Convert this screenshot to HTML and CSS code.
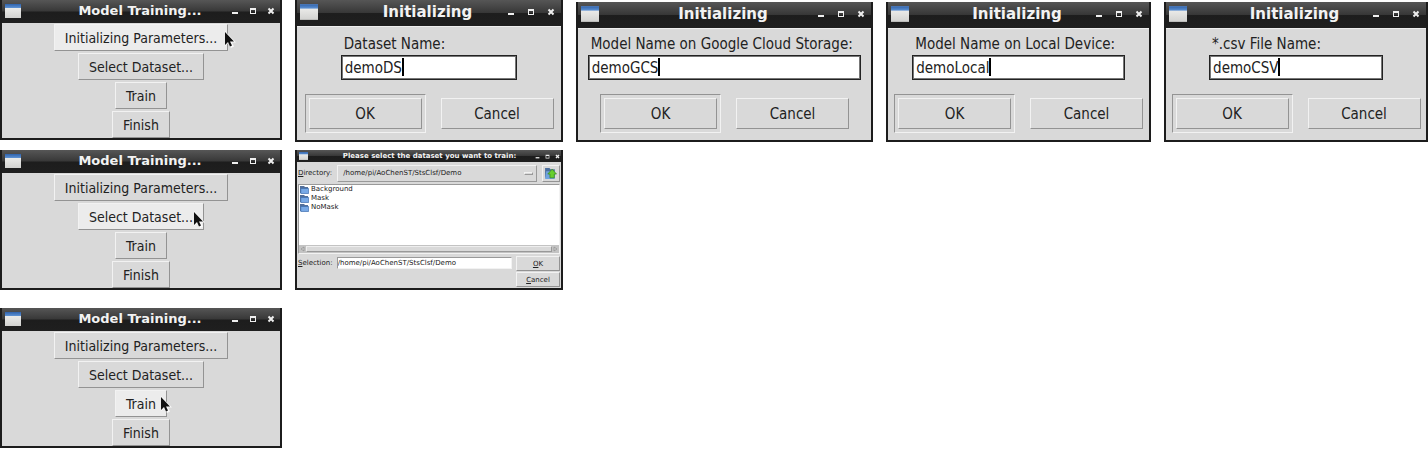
FILE: index.html
```html
<!DOCTYPE html>
<html lang="en">
<head>
<meta charset="utf-8">
<meta name="viewport" content="width=device-width, initial-scale=1">
<title>Model Training</title>
<link rel="stylesheet" href="styles.css">
</head>
<body>
<svg class="defs" width="0" height="0" aria-hidden="true">
  <defs>
    <linearGradient id="blue" x1="0" y1="0" x2="0" y2="1"><stop offset="0" stop-color="#2f62ab"/><stop offset="1" stop-color="#5f93d4"/></linearGradient>
    <linearGradient id="pane" x1="0" y1="0" x2="0" y2="1"><stop offset="0" stop-color="#f4f4f2"/><stop offset="1" stop-color="#d2d2d0"/></linearGradient>
    <symbol id="app" viewBox="0 0 16 14"><rect width="16" height="14" fill="url(#pane)"/><rect width="16" height="4" fill="url(#blue)"/></symbol>
    <symbol id="min" viewBox="0 0 8 8"><path d="M1 5h6v2H1z" fill="#eee"/></symbol>
    <symbol id="max" viewBox="0 0 8 8"><path d="M1 1h6v6H1zM2 3v3h4V3z" fill="#eee" fill-rule="evenodd"/></symbol>
    <symbol id="close" viewBox="0 0 8 8"><path d="M1.500 1.500l5 5M6.500 1.500l-5 5" stroke="#eee" stroke-width="2"/></symbol>
    <symbol id="pointer" viewBox="0 0 12 18"><path d="M1 0v15l3.500-3 2.500 5 3-1.500L8 11.500h4z" fill="#fff" opacity=".85"/><path d="M1 1v13l3-3 2 4.500 2-.9-2-4.100h4z" fill="#111"/></symbol>
    <symbol id="folder" viewBox="0 0 9 8"><path d="M0 0h4l1 1h3v6H0z" fill="#526f9b"/><path d="M.8 2.500h7.800v5H.8z" fill="#78a9e6" stroke="#3d6eaf" stroke-width=".7"/></symbol>
  </defs>
</svg>
<main class="board">
  <section class="row">
    <article class="window menu">
      <header class="bar"><svg class="app"><use href="#app"/></svg><h2>Model Training...</h2>
        <div class="controls"><button aria-label="Minimize"><svg><use href="#min"/></svg></button><button aria-label="Maximize"><svg><use href="#max"/></svg></button><button aria-label="Close"><svg><use href="#close"/></svg></button></div></header>
      <div class="actions">
        <button class="btn active">Initializing Parameters...<svg class="pointer on-params"><use href="#pointer"/></svg></button>
        <button class="btn">Select Dataset...</button>
        <button class="btn">Train</button>
        <button class="btn">Finish</button>
      </div>
    </article>
    <article class="window prompt tall">
      <header class="bar"><svg class="app"><use href="#app"/></svg><h2>Initializing</h2>
        <div class="controls"><button aria-label="Minimize"><svg><use href="#min"/></svg></button><button aria-label="Maximize"><svg><use href="#max"/></svg></button><button aria-label="Close"><svg><use href="#close"/></svg></button></div></header>
      <form class="form">
        <div class="field"><label for="ds">Dataset Name:</label><div class="entry"><input id="ds" type="text" value="demoDS"><i class="caret caret-ds"></i></div></div>
        <div class="choices"><span class="default"><button type="button" class="btn">OK</button></span><button type="button" class="btn">Cancel</button></div>
      </form>
    </article>
    <article class="window prompt">
      <header class="bar"><svg class="app"><use href="#app"/></svg><h2>Initializing</h2>
        <div class="controls"><button aria-label="Minimize"><svg><use href="#min"/></svg></button><button aria-label="Maximize"><svg><use href="#max"/></svg></button><button aria-label="Close"><svg><use href="#close"/></svg></button></div></header>
      <form class="form">
        <div class="field widest"><label for="gcs">Model Name on Google Cloud Storage:</label><div class="entry"><input id="gcs" type="text" value="demoGCS"><i class="caret caret-gcs"></i></div></div>
        <div class="choices"><span class="default"><button type="button" class="btn">OK</button></span><button type="button" class="btn">Cancel</button></div>
      </form>
    </article>
    <article class="window prompt">
      <header class="bar"><svg class="app"><use href="#app"/></svg><h2>Initializing</h2>
        <div class="controls"><button aria-label="Minimize"><svg><use href="#min"/></svg></button><button aria-label="Maximize"><svg><use href="#max"/></svg></button><button aria-label="Close"><svg><use href="#close"/></svg></button></div></header>
      <form class="form">
        <div class="field wide"><label for="local">Model Name on Local Device:</label><div class="entry"><input id="local" type="text" value="demoLocal"><i class="caret caret-local"></i></div></div>
        <div class="choices"><span class="default"><button type="button" class="btn">OK</button></span><button type="button" class="btn">Cancel</button></div>
      </form>
    </article>
    <article class="window prompt">
      <header class="bar"><svg class="app"><use href="#app"/></svg><h2>Initializing</h2>
        <div class="controls"><button aria-label="Minimize"><svg><use href="#min"/></svg></button><button aria-label="Maximize"><svg><use href="#max"/></svg></button><button aria-label="Close"><svg><use href="#close"/></svg></button></div></header>
      <form class="form">
        <div class="field"><label for="csv">*.csv File Name:</label><div class="entry"><input id="csv" type="text" value="demoCSV"><i class="caret caret-csv"></i></div></div>
        <div class="choices"><span class="default"><button type="button" class="btn">OK</button></span><button type="button" class="btn">Cancel</button></div>
      </form>
    </article>
  </section>

  <section class="row second">
    <article class="window menu">
      <header class="bar"><svg class="app"><use href="#app"/></svg><h2>Model Training...</h2>
        <div class="controls"><button aria-label="Minimize"><svg><use href="#min"/></svg></button><button aria-label="Maximize"><svg><use href="#max"/></svg></button><button aria-label="Close"><svg><use href="#close"/></svg></button></div></header>
      <div class="actions">
        <button class="btn">Initializing Parameters...</button>
        <button class="btn active">Select Dataset...<svg class="pointer on-dataset"><use href="#pointer"/></svg></button>
        <button class="btn">Train</button>
        <button class="btn">Finish</button>
      </div>
    </article>
    <article class="window chooser">
      <header class="bar"><svg class="app"><use href="#app"/></svg><h2>Please select the dataset you want to train:</h2>
        <div class="controls"><button aria-label="Minimize"><svg><use href="#min"/></svg></button><button aria-label="Maximize"><svg><use href="#max"/></svg></button><button aria-label="Close"><svg><use href="#close"/></svg></button></div></header>
      <form class="browse">
        <div class="directory">
          <label for="dir"><u>D</u>irectory:</label>
          <div class="drop"><select id="dir"><option>/home/pi/AoChenST/StsClsf/Demo</option></select><i class="knob"></i></div>
          <button type="button" class="btn up" aria-label="Parent directory"><svg viewBox="0 0 12 12"><path d="M1 1h4l1 1h4v8H1z" fill="#4b6f9f"/><path d="M2 4h8v7H1z" fill="#70a3df"/><path d="M7.500 2l4 4.500h-2V10h-4V6.500h-2z" fill="#66cf2d" stroke="#3b8e1b" stroke-width=".7"/></svg></button>
        </div>
        <div class="list">
          <ul>
            <li><svg><use href="#folder"/></svg>Background</li>
            <li><svg><use href="#folder"/></svg>Mask</li>
            <li><svg><use href="#folder"/></svg>NoMask</li>
          </ul>
          <div class="scroll"><svg viewBox="0 0 6 6"><path d="M4 1v4L1 3z" fill="#ccc" stroke="#888" stroke-width=".6"/></svg><i></i><svg viewBox="0 0 6 6"><path d="M2 1v4l3-2z" fill="#ccc" stroke="#888" stroke-width=".6"/></svg></div>
        </div>
        <div class="selection">
          <label for="sel"><u>S</u>election:</label>
          <input id="sel" type="text" value="/home/pi/AoChenST/StsClsf/Demo">
          <div class="confirm"><button type="button" class="btn"><u>O</u>K</button><button type="button" class="btn"><u>C</u>ancel</button></div>
        </div>
      </form>
    </article>
  </section>

  <section class="row third">
    <article class="window menu">
      <header class="bar"><svg class="app"><use href="#app"/></svg><h2>Model Training...</h2>
        <div class="controls"><button aria-label="Minimize"><svg><use href="#min"/></svg></button><button aria-label="Maximize"><svg><use href="#max"/></svg></button><button aria-label="Close"><svg><use href="#close"/></svg></button></div></header>
      <div class="actions">
        <button class="btn">Initializing Parameters...</button>
        <button class="btn">Select Dataset...</button>
        <button class="btn active">Train<svg class="pointer on-train"><use href="#pointer"/></svg></button>
        <button class="btn">Finish</button>
      </div>
    </article>
  </section>
</main>
</body>
</html>
```

FILE: styles.css
```css
* { box-sizing: border-box; }
body { margin: 0; background: #fff; color: #222; font: 14px/18px "DejaVu Sans Condensed", "DejaVu Sans", sans-serif; }
button, input, select { font: inherit; color: inherit; }
.defs { position: absolute; }
svg { display: block; }

.row {
  display: grid;
  grid-template-columns: minmax(0, 282fr) minmax(0, 268fr) minmax(0, 297fr) minmax(0, 265fr) minmax(0, 264fr);
  column-gap: 13px;
  align-items: end;
}
.second { margin-top: 8px; }
.third { margin-top: 18px; }

.window { display: flex; flex-direction: column; background: #d9d9d9; border: 2px solid #1c1c1c; border-top: 0; }
.menu { align-self: start; }

.bar {
  display: grid;
  grid-template-columns: 1fr auto 1fr;
  align-items: center;
  height: 23px;
  padding: 0 5px 1px 3px;
  background: linear-gradient(#565656, #383838 48%, #1d1d1d 52%, #1f1f1f);
  color: #f2f2f2;
}
.bar h2 { margin: 0; font: bold 13px/20px "DejaVu Sans", sans-serif; white-space: nowrap; }
.app { width: 16px; height: 14px; }
.controls { display: flex; justify-content: flex-end; gap: 10px; }
.controls button { padding: 0; border: 0; background: none; }
.controls svg { width: 8px; height: 8px; }

.btn {
  position: relative;
  padding: 0;
  border: 1px solid;
  border-color: #f2f2f2 #939393 #939393 #f2f2f2;
  background: #d9d9d9;
  white-space: nowrap;
}
.active { background: #ececec; }
.pointer { position: absolute; width: 12px; height: 18px; z-index: 1; }
.on-params { right: -9px; top: 6px; }
.on-dataset { right: -2px; top: 7px; }
.on-train { right: -6px; top: 5px; }

.actions { display: flex; flex-direction: column; align-items: center; gap: 2px; padding-top: 1px; }
.actions .btn { height: 27px; padding: 0 10px; }

.prompt .bar { height: 26px; padding: 0 6px 2px 3px; }
.prompt .bar h2 { font-size: 15px; }
.prompt .app { width: 18px; height: 16px; }
.prompt .controls { gap: 12px; }
.form { display: flex; flex-direction: column; align-items: center; gap: 14px; margin: 0; padding: 6px 4px 7px; border-top: 1px solid #eee; font-size: 15px; }
.tall .form { padding-top: 8px; }
.field { width: 69%; }
.wide { width: 84%; }
.widest { width: 96%; }
.field label { display: block; padding-left: 3px; white-space: nowrap; }
.entry { position: relative; margin-top: 2px; }
.entry input { display: block; width: 100%; height: 25px; padding: 0 3px; border: 1px solid #222; box-shadow: inset 0 0 0 1px #777; background: #fff; outline: 0; }
.caret { position: absolute; top: 3px; width: 2px; height: 18px; background: #000; }
.caret-ds { left: 61px; }
.caret-gcs { left: 70px; }
.caret-local { left: 77px; }
.caret-csv { left: 69px; }
.choices { display: flex; align-items: center; gap: 15px; }
.default { padding: 3px; border: 1px solid; border-color: #939393 #f2f2f2 #f2f2f2 #939393; }
.choices .btn { display: block; width: 113px; height: 31px; }

.chooser { font: 7px/10px "DejaVu Sans", sans-serif; }
.chooser .bar { height: 12px; padding: 0 1px 0 2px; }
.chooser .bar h2 { font-size: 7px; line-height: 12px; }
.chooser .app { width: 9px; height: 8px; }
.chooser .controls { gap: 5px; }
.chooser .controls svg { width: 5px; height: 5px; }
.browse { margin: 0; padding: 2px 1px 1px; }
.directory { display: flex; align-items: center; gap: 5px; height: 18px; }
.drop { position: relative; flex: 1; }
.drop select { appearance: none; display: block; width: 100%; height: 17px; padding: 0 5px; border: 1px solid; border-color: #f2f2f2 #999 #999 #f2f2f2; border-radius: 0; background: #d9d9d9; }
.knob { position: absolute; right: 4px; top: 7px; width: 9px; height: 3px; border: 1px solid; border-color: #f2f2f2 #999 #999 #f2f2f2; }
.up { width: 18px; height: 17px; padding: 1px; }
.up svg { width: 13px; height: 13px; }
.list { display: flex; flex-direction: column; justify-content: space-between; height: 70px; margin-top: 2px; border: 1px solid; border-color: #999 #f2f2f2 #f2f2f2 #999; background: #fff; }
.list ul { list-style: none; margin: 0; padding: 0 1px; line-height: 9px; }
.list li { display: flex; align-items: center; gap: 2px; }
.list li svg { width: 9px; height: 8px; }
.scroll { display: flex; align-items: center; height: 8px; padding: 0 1px; background: #c3c3c3; }
.scroll i { flex: 1; height: 6px; border: 1px solid; border-color: #eee #999 #999 #eee; background: #d9d9d9; }
.scroll svg { width: 6px; height: 6px; }
.selection { display: flex; align-items: flex-start; gap: 4px; margin-top: 2px; }
.selection label { margin-top: 2px; }
.selection input { flex: 1; min-width: 0; height: 12px; margin-top: 1px; padding: 0; border: 1px solid; border-color: #999 #f2f2f2 #f2f2f2 #999; background: #fff; }
.confirm { display: flex; flex-direction: column; gap: 1px; width: 44px; }
.confirm .btn { height: 15px; line-height: 12px; }
```
